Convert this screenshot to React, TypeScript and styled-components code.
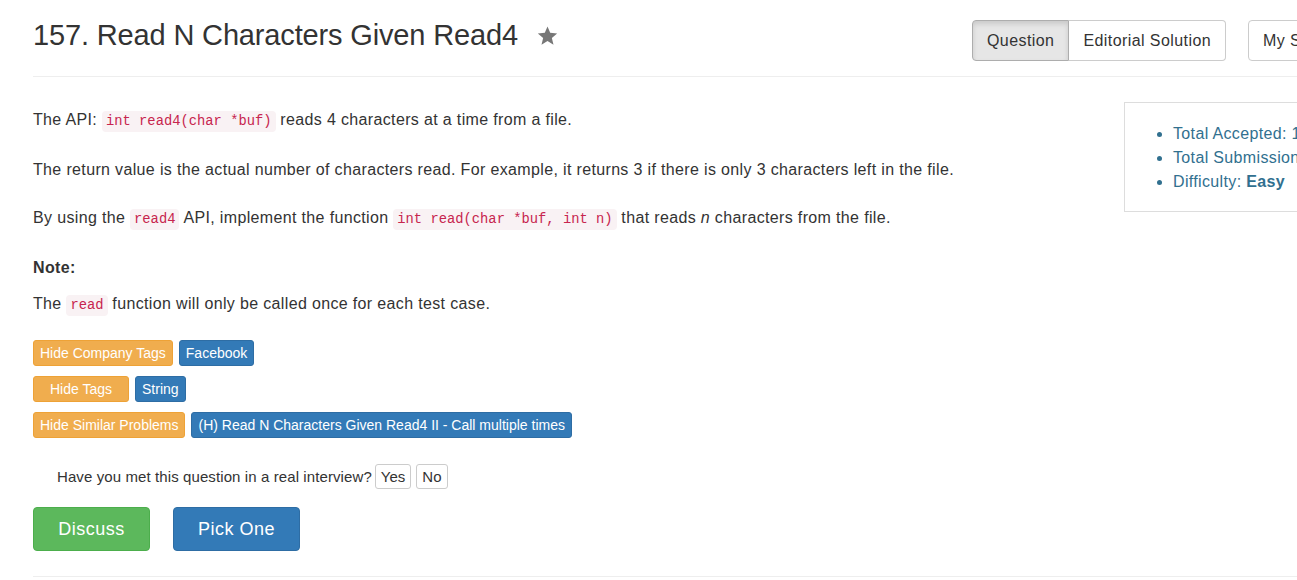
import styled, { createGlobalStyle } from 'styled-components';

const GlobalStyle = createGlobalStyle`
    html, body {
        margin: 0;
        padding: 0;
        background: #fff;
        overflow: hidden;
    }
    body {
        font-family: "Liberation Sans", Arial, sans-serif;
        font-size: 16px;
        letter-spacing: 0.35px;
        color: #333;
    }
`;

const Page = styled.div`
    width: 1400px;
    padding-left: 33px;
`;

const Header = styled.div`
    display: grid;
    grid-template-columns: 939px auto;
    align-items: start;
    padding-top: 19px;
`;

const TitleRow = styled.div`
    display: flex;
    align-items: center;
    gap: 19px;
`;

const Title = styled.h1`
    margin: 0;
    font-size: 29px;
    letter-spacing: -0.15px;
    font-weight: 400;
    line-height: 33px;
    color: #333;
`;

const Tabs = styled.div`
    display: flex;
    align-items: center;
    padding-top: 1px;
`;

const TabGroup = styled.div`
    display: flex;
`;

const TabButton = styled.button<{ $active?: boolean; $first?: boolean; $last?: boolean }>`
    font-family: inherit;
    font-size: 16px;
    letter-spacing: 0.42px;
    line-height: 22px;
    height: 41px;
    padding: 8px 14px;
    color: #333;
    background: ${({ $active }) => ($active ? '#e6e6e6' : '#fff')};
    border: 1px solid ${({ $active }) => ($active ? '#adadad' : '#ccc')};
    box-shadow: ${({ $active }) => ($active ? 'inset 0 3px 5px rgba(0,0,0,0.125)' : 'none')};
    border-radius: ${({ $first, $last }) =>
        $first ? '4px 0 0 4px' : $last ? '0 4px 4px 0' : '4px'};
    margin-left: ${({ $first, $last }) => ($first || $last ? '0' : '22px')};
    ${({ $last }) => ($last ? 'border-left: none;' : '')}
    white-space: nowrap;
`;

const Rule = styled.hr`
    border: none;
    border-top: 1px solid #eee;
    margin: 0;
`;

const HeaderRule = styled(Rule)`
    margin-top: 15px;
`;

const Body = styled.div`
    display: grid;
    grid-template-columns: 1091px 300px;
    padding-top: 31px;
`;

const Content = styled.div``;

const Para = styled.p<{ $gap?: number }>`
    margin: 0 0 ${({ $gap }) => $gap ?? 24}px;
    line-height: 24px;
    font-size: 16px;
`;

const Code = styled.code`
    font-family: "Liberation Mono", "DejaVu Sans Mono", monospace;
    font-size: 13.8px;
    letter-spacing: 0;
    color: #c7254e;
    background: #f9f2f4;
    padding: 3px 4px;
    border-radius: 4px;
`;

const TagRow = styled.div`
    display: flex;
    gap: 6px;
    margin-bottom: 10px;
`;

const Label = styled.span<{ $tone: 'warning' | 'primary'; $pad?: number }>`
    display: inline-block;
    font-size: 14px;
    letter-spacing: 0;
    line-height: 16px;
    padding: 4px ${({ $pad }) => $pad ?? 6}px;
    color: #fff;
    border-radius: 3px;
    background: ${({ $tone }) => ($tone === 'warning' ? '#f0ad4e' : '#337ab7')};
    border: 1px solid ${({ $tone }) => ($tone === 'warning' ? '#eea236' : '#2e6da4')};
    white-space: nowrap;
`;

const Interview = styled.div`
    display: flex;
    align-items: center;
    gap: 5px;
    margin: 26px 0 0 24px;
    font-size: 15px;
    letter-spacing: 0.1px;
`;

const SmallButton = styled.button`
    font-family: inherit;
    font-size: 15px;
    letter-spacing: 0;
    color: #333;
    background: #fff;
    border: 1px solid #ccc;
    border-radius: 3px;
    height: 25px;
    padding: 0 5px;
`;

const InterviewText = styled.span`
    margin-right: -2px;
`;

const Actions = styled.div`
    display: flex;
    gap: 23px;
    margin: 18px 0 25px;
`;

const BigButton = styled.button<{ $tone: 'success' | 'primary'; $width: number }>`
    font-family: inherit;
    font-size: 18px;
    letter-spacing: 0.5px;
    color: #fff;
    width: ${({ $width }) => $width}px;
    height: 44px;
    border-radius: 4px;
    border: 1px solid ${({ $tone }) => ($tone === 'success' ? '#4cae4c' : '#2e6da4')};
    background: ${({ $tone }) => ($tone === 'success' ? '#5cb85c' : '#337ab7')};
`;

const Sidebar = styled.div`
    margin-top: -6px;
    border: 1px solid #ddd;
    border-right: none;
    padding: 19px 0 17px;
    align-self: start;
`;

const Stats = styled.ul`
    margin: 0;
    padding-left: 48px;
    color: #31708f;
    font-size: 16px;
    line-height: 24px;
    white-space: nowrap;
`;

const Star = () => (
    <svg width="21" height="20" viewBox="0 0 24 23">
        <path
            d="M12 0.5l3.1 7.4 8 0.6-6.1 5.2 1.9 7.8L12 17.3l-6.9 4.2 1.9-7.8L0.9 8.5l8-0.6z"
            fill="#777"
        />
    </svg>
);

export default function App() {
    return (
        <>
            <GlobalStyle />
            <Page>
                <Header>
                    <TitleRow>
                        <Title>157. Read N Characters Given Read4</Title>
                        <Star />
                    </TitleRow>
                    <Tabs>
                        <TabGroup>
                            <TabButton $active $first>
                                Question
                            </TabButton>
                            <TabButton $last>Editorial Solution</TabButton>
                        </TabGroup>
                        <TabButton>My Submissions</TabButton>
                    </Tabs>
                </Header>
                <HeaderRule />
                <Body>
                    <Content>
                        <Para>
                            The API: <Code>int read4(char *buf)</Code> reads 4 characters at a time from a file.
                        </Para>
                        <Para>
                            The return value is the actual number of characters read. For example, it returns 3 if
                            there is only 3 characters left in the file.
                        </Para>
                        <Para>
                            By using the <Code>read4</Code> API, implement the function{' '}
                            <Code>int read(char *buf, int n)</Code> that reads <i>n</i> characters from the file.
                        </Para>
                        <Para $gap={12}>
                            <b>Note:</b>
                        </Para>
                        <Para $gap={22}>
                            The <Code>read</Code> function will only be called once for each test case.
                        </Para>
                        <TagRow>
                            <Label $tone="warning">Hide Company Tags</Label>
                            <Label $tone="primary">Facebook</Label>
                        </TagRow>
                        <TagRow>
                            <Label $tone="warning" $pad={16}>
                                Hide Tags
                            </Label>
                            <Label $tone="primary" $pad={6}>
                                String
                            </Label>
                        </TagRow>
                        <TagRow>
                            <Label $tone="warning" $pad={6}>
                                Hide Similar Problems
                            </Label>
                            <Label $tone="primary">(H) Read N Characters Given Read4 II - Call multiple times</Label>
                        </TagRow>
                        <Interview>
                            <InterviewText>Have you met this question in a real interview?</InterviewText>
                            <SmallButton>Yes</SmallButton>
                            <SmallButton>No</SmallButton>
                        </Interview>
                        <Actions>
                            <BigButton $tone="success" $width={117}>
                                Discuss
                            </BigButton>
                            <BigButton $tone="primary" $width={127}>
                                Pick One
                            </BigButton>
                        </Actions>
                    </Content>
                    <Sidebar>
                        <Stats>
                            <li>Total Accepted: 18542</li>
                            <li>Total Submissions: 60126</li>
                            <li>
                                Difficulty: <b>Easy</b>
                            </li>
                        </Stats>
                    </Sidebar>
                </Body>
                <Rule />
            </Page>
        </>
    );
}
